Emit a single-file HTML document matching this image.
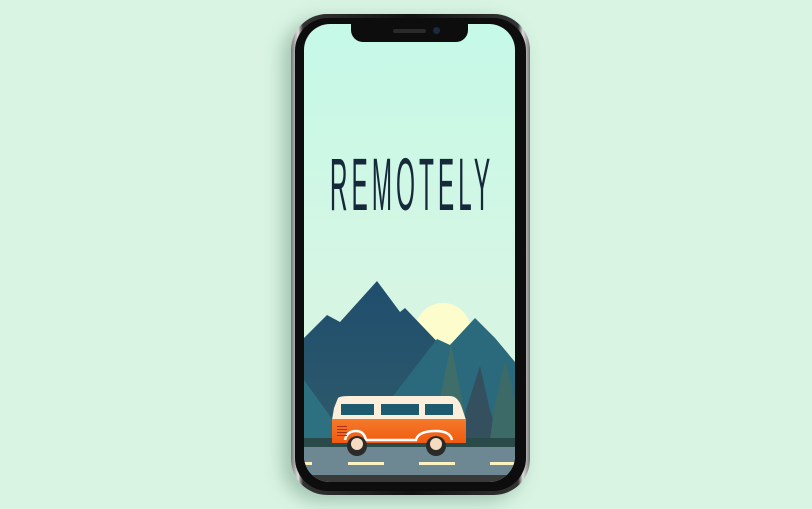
<!DOCTYPE html>
<html><head><style>
html,body{margin:0;padding:0;width:812px;height:509px;overflow:hidden;background:#d9f4e3;}
.phone{position:absolute;left:291px;top:14px;width:239px;height:481px;border-radius:36px;background:linear-gradient(90deg,#777,#ddd 3%,#333 5%,#111 50%,#333 95%,#ddd 97%,#777);box-shadow:-8px 6px 18px rgba(60,100,80,.35);}
.inner{position:absolute;left:295px;top:18px;width:231px;height:473px;border-radius:33px;background:#0d0d0d;}
.screen{position:absolute;left:304px;top:24px;width:211px;height:458px;border-radius:26px;overflow:hidden;background:linear-gradient(#c6f9e8,#d6f6e3 60%);}
.notch{position:absolute;left:351px;top:22px;width:117px;height:20px;background:#0d0d0d;border-radius:0 0 12px 12px;}
.title{position:absolute;left:109.5px;top:148px;width:600px;text-align:center;font-family:"Liberation Sans",sans-serif;font-size:74px;line-height:74px;color:#16293a;letter-spacing:12px;transform:scaleX(.33);transform-origin:center;white-space:nowrap;text-indent:12px;}
</style></head><body>
<div class="phone"></div><div class="inner"></div>
<div class="screen">
<svg width="211" height="458" viewBox="304 24 211 458" style="position:absolute;left:0;top:0">
<defs><linearGradient id="dm" x1="0" y1="0" x2="0" y2="1"><stop offset="0" stop-color="#1f4e6e"/><stop offset="1" stop-color="#2f5a6a"/></linearGradient>
<linearGradient id="or" x1="0" y1="0" x2="0" y2="1"><stop offset="0" stop-color="#f57a2a"/><stop offset="1" stop-color="#f05a10"/></linearGradient></defs>
<circle cx="443" cy="331" r="28" fill="#fdfccc"/>
<polygon points="304,338 327,315 340,322 377,281 400,312 405,308 447,352 447,440 304,440" fill="url(#dm)"/>
<polygon points="390,400 437,339 450,345 475,318 495,338 515,362 515,440 390,440" fill="#2a6a7c"/>
<polygon points="304,380 340,430 340,440 304,440" fill="#2d7080"/>
<polygon points="451,343 440,400 430,440 470,440 462,400" fill="#3f6e6a"/>
<polygon points="480,366 466,410 460,440 500,440 490,410" fill="#34505e"/>
<polygon points="505,360 494,410 490,440 515,440 515,400" fill="#3c6a66"/>
<rect x="304" y="438" width="211" height="9" fill="#2a4a4a"/>
<rect x="304" y="447" width="211" height="28" fill="#6d8893"/>
<rect x="304" y="475" width="211" height="7" fill="#3a3a3a"/>
<g fill="#fbf2c0"><rect x="304" y="462" width="8" height="3"/><rect x="348" y="462" width="36" height="3"/><rect x="419" y="462" width="36" height="3"/><rect x="490" y="462" width="36" height="3"/></g>
<path d="M338,398 Q340,396 350,396 L450,396 Q458,396 462,408 L466,420 L332,420 L334,408 Z" fill="#fbefdc"/>
<rect x="332" y="419" width="134" height="24" fill="url(#or)"/>
<g fill="#1e5a6e"><rect x="341" y="404" width="33" height="11"/><rect x="381" y="404" width="38" height="11"/><rect x="425" y="404" width="28" height="11"/></g>
<path d="M345,440 Q347,431 356,431 Q364,431 366,440 L416,440 Q418,431 436,431 Q450,431 452,440" fill="none" stroke="#fff" stroke-width="2.5"/>
<circle cx="357" cy="446" r="10" fill="#2a2a2a"/><circle cx="357" cy="444" r="6" fill="#f5dcc0"/>
<circle cx="436" cy="446" r="10" fill="#2a2a2a"/><circle cx="436" cy="444" r="6" fill="#f5dcc0"/>
<g fill="#a8321a"><rect x="337" y="426" width="10" height="1"/><rect x="337" y="429" width="10" height="1"/><rect x="337" y="432" width="10" height="1"/><rect x="337" y="435" width="10" height="1"/></g>
</svg>
</div>
<div class="notch"><div style="position:absolute;left:42px;top:7px;width:33px;height:4px;border-radius:2px;background:#2a2a2a"></div><div style="position:absolute;left:82px;top:5px;width:7px;height:7px;border-radius:50%;background:#1b2a40"></div></div>
<div class="title">REMOTELY</div>
</body></html>
